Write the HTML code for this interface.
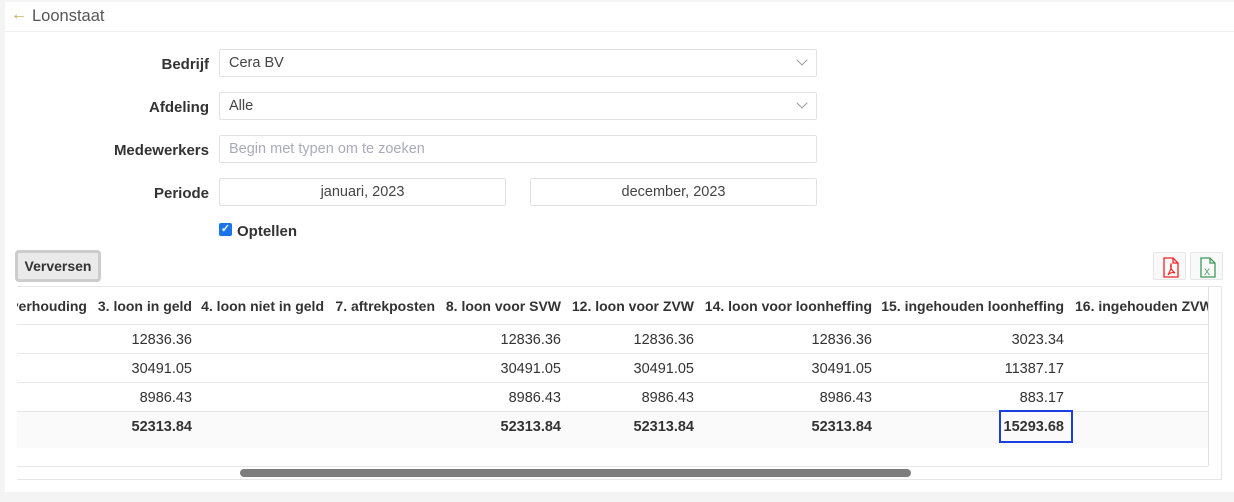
<!DOCTYPE html>
<html><head><style>
*{box-sizing:border-box;margin:0;padding:0}
body{width:1234px;height:502px;background:#f4f4f4;font-family:"Liberation Sans",sans-serif;font-size:14px;color:#333;position:relative;overflow:hidden}
.card{position:absolute;left:5px;top:2px;width:1229px;height:490px;background:#fff}
.a{position:absolute}
.lbl{position:absolute;right:1025px;font-weight:bold;font-size:15px;color:#333}
.inp{position:absolute;height:28px;border:1px solid #e2e2e2;border-radius:2px;background:#fff;font-size:14.5px;color:#444;line-height:26px;padding-left:9px}
.chev{position:absolute;right:10px;top:9px;width:8px;height:8px;border-right:1px solid #999;border-bottom:1px solid #999;transform:rotate(45deg)}
.th{position:absolute;top:297px;font-weight:bold;font-size:14px;white-space:nowrap}
.td{position:absolute;font-size:14.5px;white-space:nowrap;text-align:right}
.b{font-weight:bold}
.hl{position:absolute;left:17px;width:1191px;height:1px;background:#e6e6e6}
</style></head><body>
<div class="card"></div>
<div class="a" style="left:5px;top:31px;width:1229px;height:1px;background:#f0f0f0"></div>
<div class="a" style="left:11px;top:6px;color:#c9a24a;font-size:16px">&#8592;</div>
<div class="a" style="left:32px;top:7px;font-size:16.5px;color:#555">Loonstaat</div>

<div class="lbl" style="top:56px">Bedrijf</div>
<div class="inp" style="left:219px;top:49px;width:598px">Cera BV<div class="chev" style="top:6px"></div></div>
<div class="lbl" style="top:99px">Afdeling</div>
<div class="inp" style="left:219px;top:92px;width:598px">Alle<div class="chev" style="top:6px"></div></div>
<div class="lbl" style="top:142px">Medewerkers</div>
<div class="inp" style="left:219px;top:135px;width:598px;color:#aab">Begin met typen om te zoeken</div>
<div class="lbl" style="top:185px">Periode</div>
<div class="inp" style="left:219px;top:178px;width:287px;text-align:center;padding:0">januari, 2023</div>
<div class="inp" style="left:530px;top:178px;width:287px;text-align:center;padding:0">december, 2023</div>
<div class="a" style="left:219px;top:223px;width:13px;height:13px;background:#1a73e8;border-radius:2px;color:#fff;font-size:11px;line-height:13px;text-align:center;font-weight:bold">&#10003;</div>
<div class="a" style="left:237px;top:223px;font-weight:bold;font-size:15px">Optellen</div>

<div class="a" style="left:15px;top:250px;width:86px;height:32px;border:3px solid #ccc;border-radius:4px;background:#eaeaea;font-weight:bold;font-size:14px;line-height:26px;text-align:center">Verversen</div>
<div class="a" style="left:1153px;top:252px;width:33px;height:28px;border:1px solid #e6e6e6;border-radius:2px;background:#f9f9f9">
<svg width="33" height="28" viewBox="0 0 33 28"><path d="M10 5h9l5 5v14H10z" fill="none" stroke="#e22" stroke-width="1.3"/><path d="M19 5v5h5" fill="none" stroke="#e22" stroke-width="1.3"/><path d="M14 22c2-4 4-8 3-11-1 3 0 6 4 9-3-1-6 0-7 2" fill="none" stroke="#e22" stroke-width="1.1"/></svg></div>
<div class="a" style="left:1190px;top:252px;width:33px;height:28px;border:1px solid #e6e6e6;border-radius:2px;background:#f9f9f9">
<svg width="33" height="28" viewBox="0 0 33 28"><path d="M10 5h9l5 5v14H10z" fill="none" stroke="#3a9a5a" stroke-width="1.3"/><path d="M19 5v5h5" fill="none" stroke="#3a9a5a" stroke-width="1.3"/><text x="13" y="22" font-size="9" fill="#3a9a5a" font-family="Liberation Sans">X</text></svg></div>

<div class="a" style="left:17px;top:286px;width:1205px;height:194px;border-top:1px solid #e6e6e6;border-right:1px solid #e6e6e6;border-bottom:1px solid #e6e6e6"></div>
<div class="a" style="left:17px;top:411px;width:1191px;height:37px;background:#fafafa"></div>
<div class="a" style="left:1208px;top:286px;width:1px;height:180px;background:#e0e0e0"></div>
<div class="hl" style="top:324px"></div><div class="hl" style="top:353px"></div><div class="hl" style="top:382px"></div><div class="hl" style="top:411px"></div><div class="hl" style="top:466px"></div>
<div class="a" style="left:240px;top:469px;width:671px;height:8px;border-radius:4px;background:#7d7d7d"></div>

<div class="a" style="left:17px;top:286px;width:1191px;height:40px;overflow:hidden">
<div class="th" style="top:12px;right:1121px">verhouding</div>
<div class="th" style="top:12px;right:1016px">3. loon in geld</div>
<div class="th" style="top:12px;right:884px">4. loon niet in geld</div>
<div class="th" style="top:12px;right:773px">7. aftrekposten</div>
<div class="th" style="top:12px;right:647px">8. loon voor SVW</div>
<div class="th" style="top:12px;right:514px">12. loon voor ZVW</div>
<div class="th" style="top:12px;right:336px">14. loon voor loonheffing</div>
<div class="th" style="top:12px;right:144px">15. ingehouden loonheffing</div>
<div class="th" style="top:12px;left:1058px">16. ingehouden ZVW</div>
</div>

<div class="td" style="right:1042px;top:332px">12836.36</div>
<div class="td" style="right:673px;top:332px">12836.36</div>
<div class="td" style="right:540px;top:332px">12836.36</div>
<div class="td" style="right:362px;top:332px">12836.36</div>
<div class="td" style="right:170px;top:332px">3023.34</div>
<div class="td" style="right:1042px;top:361px">30491.05</div>
<div class="td" style="right:673px;top:361px">30491.05</div>
<div class="td" style="right:540px;top:361px">30491.05</div>
<div class="td" style="right:362px;top:361px">30491.05</div>
<div class="td" style="right:170px;top:361px">11387.17</div>
<div class="td" style="right:1042px;top:390px">8986.43</div>
<div class="td" style="right:673px;top:390px">8986.43</div>
<div class="td" style="right:540px;top:390px">8986.43</div>
<div class="td" style="right:362px;top:390px">8986.43</div>
<div class="td" style="right:170px;top:390px">883.17</div>
<div class="td b" style="right:1042px;top:419px">52313.84</div>
<div class="td b" style="right:673px;top:419px">52313.84</div>
<div class="td b" style="right:540px;top:419px">52313.84</div>
<div class="td b" style="right:362px;top:419px">52313.84</div>
<div class="a" style="left:999px;top:410px;width:74px;height:33px;border:2px solid #1a3fe0"></div>
<div class="td b" style="right:170px;top:419px">15293.68</div>
</body></html>
